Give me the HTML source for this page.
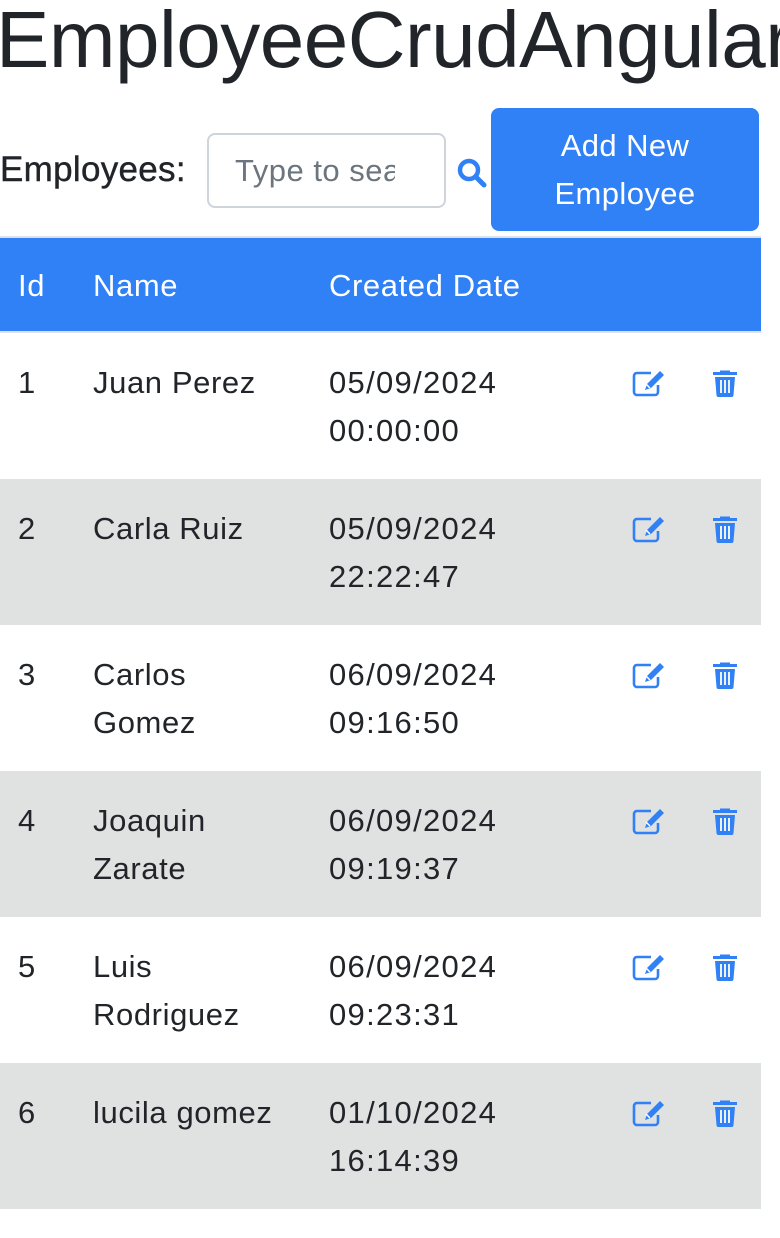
<!DOCTYPE html>
<html><head><meta charset="utf-8"><style>
*{box-sizing:border-box;margin:0;padding:0}
body{width:780px;height:1238px;overflow:hidden;background:#fff;font-family:"Liberation Sans",Helvetica,Arial,sans-serif;color:#212529;position:relative}
h1{position:absolute;left:-4px;top:-8px;font-size:80px;font-weight:500;white-space:nowrap;letter-spacing:-0.5px;line-height:1.2}
.lbl{position:absolute;left:0;top:150px;font-size:35px;letter-spacing:0.3px;-webkit-text-stroke:0.4px #212529}
.inp{position:absolute;left:207px;top:133px;width:239px;height:75px;border:2px solid #ced4da;border-radius:8px;font-size:31px;color:#6c757d;padding:18px 0 0 26px;white-space:nowrap}
.inp div{width:160px;overflow:hidden;letter-spacing:0.5px}
.srch{position:absolute;left:456px;top:157px}
.btn{position:absolute;left:491px;top:108px;width:268px;height:123px;background:#3080f6;border-radius:8px;color:#fff;font-size:31px;letter-spacing:0.4px;text-align:center;line-height:48px;padding-top:14px}
.hdr{position:absolute;left:0;top:236px;width:761px;height:97px;background:#3080f6;color:#fff;font-size:31px;letter-spacing:0.6px;border-top:2px solid #dee2e6;border-bottom:2px solid #dee2e6}
.hdr span{position:absolute;top:30px}
.row{position:absolute;left:0;width:761px;height:146px;font-size:31px;line-height:48px;letter-spacing:0.6px}
.row.g{background:#e0e1e1}
.row span{position:absolute;top:26px}
.row span.d{letter-spacing:1.3px}
.e{position:absolute;left:632px;top:36px}
.t{position:absolute;left:712px;top:36px}
</style></head><body>
<h1>EmployeeCrudAngular</h1>
<div class="lbl">Employees:</div>
<div class="inp"><div>Type to sea</div></div>
<svg class="srch" width="32" height="32" viewBox="0 0 32 32"><circle cx="13" cy="13" r="9" fill="none" stroke="#3080f6" stroke-width="4.5"/><line x1="20" y1="20" x2="28" y2="28" stroke="#3080f6" stroke-width="5" stroke-linecap="round"/></svg>
<div class="btn">Add New<br>Employee</div>
<div class="hdr"><span style="left:18px">Id</span><span style="left:93px">Name</span><span style="left:329px">Created Date</span></div>
<div id="rows"></div>
<script>
var d=[["1","Juan Perez","05/09/2024<br>00:00:00"],["2","Carla Ruiz","05/09/2024<br>22:22:47"],["3","Carlos<br>Gomez","06/09/2024<br>09:16:50"],["4","Joaquin<br>Zarate","06/09/2024<br>09:19:37"],["5","Luis<br>Rodriguez","06/09/2024<br>09:23:31"],["6","lucila gomez","01/10/2024<br>16:14:39"]];
var tops=[333,479,625,771,917,1063],h="";
var E='<svg class="e" width="34" height="28" viewBox="0 0 34 28"><path d="M19 4H5a3 3 0 0 0-3 3v16a3 3 0 0 0 3 3h18a3 3 0 0 0 3-3v-7" fill="none" stroke="#3080f6" stroke-width="2.6"/><path d="M28 2l4 4-13 13-6 2 2-6z" fill="#3080f6"/><path d="M14 15l4 4" stroke="#fff" stroke-width="1.5"/></svg>';
var T='<svg class="t" width="26" height="28" viewBox="0 0 26 28"><path d="M8 3V1.5h10V3h7v3H1V3z" fill="#3080f6"/><path d="M3 8h20l-1.5 18a2 2 0 0 1-2 2h-13a2 2 0 0 1-2-2z" fill="#3080f6"/><path d="M9 11v13M13 11v13M17 11v13" stroke="#fff" stroke-width="1.8"/></svg>';
d.forEach(function(r,i){h+='<div class="row'+(i%2?' g':'')+'" style="top:'+tops[i]+'px"><span style="left:18px">'+r[0]+'</span><span style="left:93px">'+r[1]+'</span><span class="d" style="left:329px">'+r[2]+'</span>'+E+T+'</div>';});
document.getElementById('rows').innerHTML=h;
</script>
</body></html>
